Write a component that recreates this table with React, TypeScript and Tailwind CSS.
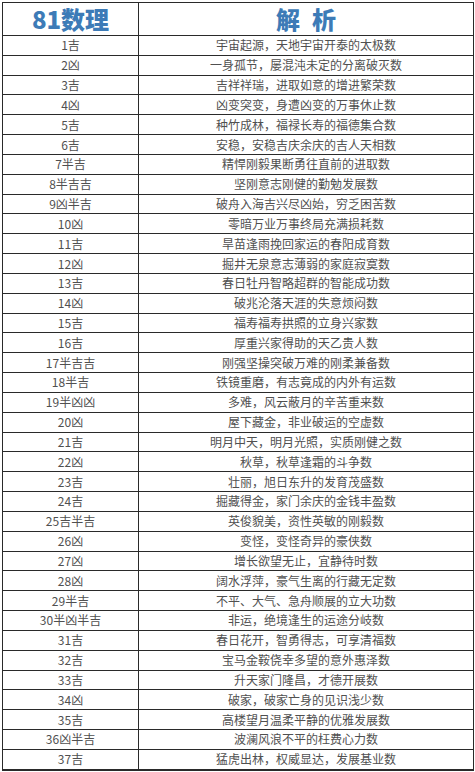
import React from "react";

interface Row {
  num: string;
  desc: string;
}

const rows: Row[] = [
  { num: "1吉", desc: "宇宙起源，天地宇宙开泰的太极数" },
  { num: "2凶", desc: "一身孤节，屡混沌未定的分离破灭数" },
  { num: "3吉", desc: "吉祥祥瑞，进取如意的增进繁荣数" },
  { num: "4凶", desc: "凶变突变，身遭凶变的万事休止数" },
  { num: "5吉", desc: "种竹成林，福禄长寿的福德集合数" },
  { num: "6吉", desc: "安稳，安稳吉庆余庆的吉人天相数" },
  { num: "7半吉", desc: "精悍刚毅果断勇往直前的进取数" },
  { num: "8半吉吉", desc: "坚刚意志刚健的勤勉发展数" },
  { num: "9凶半吉", desc: "破舟入海吉兴尽凶始，穷乏困苦数" },
  { num: "10凶", desc: "零暗万业万事终局充满损耗数" },
  { num: "11吉", desc: "旱苗逢雨挽回家运的春阳成育数" },
  { num: "12凶", desc: "掘井无泉意志薄弱的家庭寂寞数" },
  { num: "13吉", desc: "春日牡丹智略超群的智能成功数" },
  { num: "14凶", desc: "破兆沦落天涯的失意烦闷数" },
  { num: "15吉", desc: "福寿福寿拱照的立身兴家数" },
  { num: "16吉", desc: "厚重兴家得助的天乙贵人数" },
  { num: "17半吉吉", desc: "刚强坚操突破万难的刚柔兼备数" },
  { num: "18半吉", desc: "铁镜重磨，有志竟成的内外有运数" },
  { num: "19半凶凶", desc: "多难，风云蔽月的辛苦重来数" },
  { num: "20凶", desc: "屋下藏金，非业破运的空虚数" },
  { num: "21吉", desc: "明月中天，明月光照，实质刚健之数" },
  { num: "22凶", desc: "秋草，秋草逢霜的斗争数" },
  { num: "23吉", desc: "壮丽，旭日东升的发育茂盛数" },
  { num: "24吉", desc: "掘藏得金，家门余庆的金钱丰盈数" },
  { num: "25吉半吉", desc: "英俊貌美，资性英敏的刚毅数" },
  { num: "26凶", desc: "变怪，变怪奇异的豪侠数" },
  { num: "27凶", desc: "增长欲望无止，宜静待时数" },
  { num: "28凶", desc: "阔水浮萍，豪气生离的行藏无定数" },
  { num: "29半吉", desc: "不平、大气、急舟顺展的立大功数" },
  { num: "30半凶半吉", desc: "非运，绝境逢生的运途分岐数" },
  { num: "31吉", desc: "春日花开，智勇得志，可享清福数" },
  { num: "32吉", desc: "宝马金鞍侥幸多望的意外惠泽数" },
  { num: "33吉", desc: "升天家门隆昌，才德开展数" },
  { num: "34凶", desc: "破家，破家亡身的见识浅少数" },
  { num: "35吉", desc: "高楼望月温柔平静的优雅发展数" },
  { num: "36凶半吉", desc: "波澜风浪不平的枉费心力数" },
  { num: "37吉", desc: "猛虎出林，权威显达，发展基业数" },
];

export default function App() {
  return (
    <div
      className="w-[475px] h-[772px] bg-white pt-[2px] pl-[2px] overflow-hidden"
      style={{ fontFamily: '"Noto Sans CJK SC", "Noto Sans", sans-serif' }}
    >
      <div className="w-[472px] border-[1.5px] border-[#2a2a2a]">
        {/* header */}
        <div className="grid grid-cols-[136px_1fr] h-[33px] border-b border-[#2a2a2a]">
          <div className="flex items-center justify-center border-r border-[#2a2a2a] text-[24px] font-black text-[#3d7bb7] leading-none">
            81数理
          </div>
          <div className="flex items-center justify-center gap-[12px] text-[24px] font-black text-[#3d7bb7] leading-none">
            <span>解</span>
            <span>析</span>
          </div>
        </div>

        {rows.map((row) => (
          <div
            key={row.num}
            className="grid grid-cols-[136px_1fr] h-[19.84px] border-b border-[#2a2a2a] text-[12px] text-[#505050] leading-none"
          >
            <div className="flex items-center justify-center border-r border-[#2a2a2a]">
              {row.num}
            </div>
            <div className="flex items-center justify-center">{row.desc}</div>
          </div>
        ))}
      </div>
    </div>
  );
}
